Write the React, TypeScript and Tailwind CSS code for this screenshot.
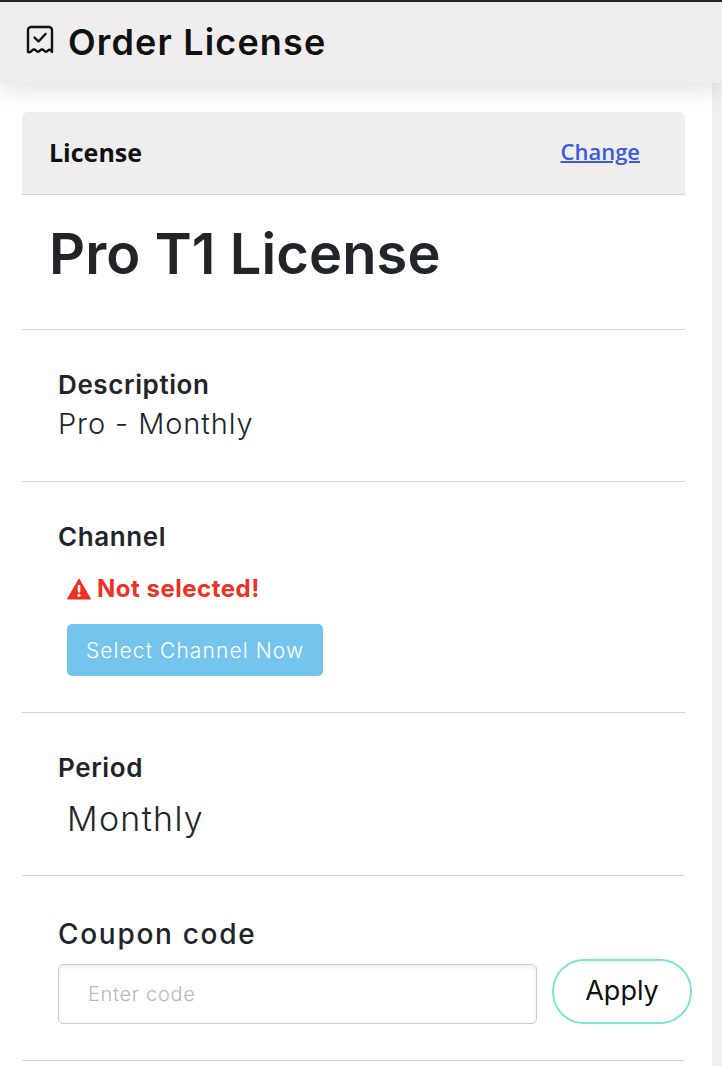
const heading = "font-['Inter',sans-serif] text-[#212529]";

function ReceiptCheck() {
  return (
    <svg width="28" height="30" viewBox="0 0 28 30" fill="none" stroke="#111" strokeWidth="2.400" strokeLinecap="round" strokeLinejoin="round" className="mb-[5px]">
      <path d="M2 27V5a3 3 0 0 1 3-3h18a3 3 0 0 1 3 3v22Q24 23.500 22 25.500Q20 28 18 25.500Q16 23.500 14 25.500Q12 28 10 25.500Q8 23.500 6 25.500Q4 28 2 27z" />
      <path d="M8.500 12.500l4 4 7-7.500" />
    </svg>
  );
}

function Warning() {
  return (
    <svg width="24" height="22" viewBox="0 0 24 22">
      <path d="M12 1 L23.500 21 H0.500 Z" fill="#ee3124" stroke="#ee3124" strokeWidth="1" strokeLinejoin="round" />
      <rect x="10.700" y="7" width="2.600" height="7.500" rx="1" fill="#fff" />
      <circle cx="12" cy="17.300" r="1.600" fill="#fff" />
    </svg>
  );
}

export default function App() {
  return (
    <div className="w-[722px] h-[1066px] overflow-hidden bg-white flex flex-col">
      <div className="relative z-10 h-[83px] shrink-0 border-t-2 border-[#222] bg-[#efedee] shadow-[0_6px_24px_rgba(0,0,0,0.12)] flex items-center pl-[26px] gap-[14px]">
        <ReceiptCheck />
        <h1 className="font-['Inter',sans-serif] text-[36px] font-semibold text-[#111] tracking-[1.150px] leading-none -mt-[1px]">Order License</h1>
      </div>

      <div className="flex flex-1 min-h-0">
        <div className="w-[712px] shrink-0 pl-[22px] pr-[27px] pt-[29px]">
          <div className="h-[83px] rounded-t-[6px] bg-[#efedee] border-b border-[#d8d4d2] flex items-center justify-between pl-[27px] pr-[45px]">
            <span className="font-['Open_Sans',sans-serif] text-[25px] font-bold text-[#111]">License</span>
            <a href="#" className="font-['Open_Sans',sans-serif] text-[22px] font-semibold text-[#3b5bdb] underline decoration-2 -mt-[4px]">Change</a>
          </div>

          <div className="h-[135px] border-b border-[#d8d4d2] pl-[27px] pt-[27px]">
            <h2 className={`${heading} text-[56px] font-semibold tracking-[0.1px] leading-[64px]`}>Pro T1 License</h2>
          </div>

          <div className="h-[152px] border-b border-[#d8d4d2] pl-[36px] pt-[40px]">
            <p className={`${heading} text-[26px] font-semibold tracking-[0.6px] leading-[30px]`}>Description</p>
            <p className={`${heading} text-[29px] font-light tracking-[0.9px] leading-[40px] mt-[4px]`}>Pro - Monthly</p>
          </div>

          <div className="h-[231px] border-b border-[#d8d4d2] pl-[36px] pt-[40px]">
            <p className={`${heading} text-[26px] font-semibold tracking-[0.6px] leading-[30px]`}>Channel</p>
            <div className="flex items-center gap-[6px] ml-[9px] mt-[22px]">
              <Warning />
              <span className="font-['Inter',sans-serif] text-[24px] font-bold tracking-[0.5px] text-[#ee3124] leading-[30px]">Not selected!</span>
            </div>
            <button className="block ml-[9px] mt-[20px] w-[256px] h-[52px] pt-[2px] rounded-[5px] bg-[#74c4ee] font-['Inter',sans-serif] text-[21px] font-light tracking-[1.100px] text-white">Select Channel Now</button>
          </div>

          <div className="h-[163px] border-b border-[#d8d4d2] pl-[36px] pt-[40px]">
            <p className={`${heading} text-[26px] font-semibold tracking-[0.6px] leading-[30px]`}>Period</p>
            <p className={`${heading} ml-[9px] mt-[14px] text-[34px] font-light tracking-[1.300px] leading-[44px]`}>Monthly</p>
          </div>

          <div className="h-[185px] border-b border-[#d8d4d2] pl-[36px] pt-[41px]">
            <p className={`${heading} text-[28px] font-medium tracking-[1.700px] leading-[34px]`}>Coupon code</p>
            <div className="flex items-end gap-[15px] -mr-[7px] mt-[8px]">
              <input
                placeholder="Enter code"
                className="w-[479px] h-[60px] rounded-[5px] border border-[#cccccc] shadow-[inset_0_2px_4px_rgba(0,0,0,0.08)] pl-[29px] font-['Inter',sans-serif] text-[20px] font-light tracking-[0.7px] placeholder:text-[#b9b9b9]"
              />
              <button className="w-[140px] h-[65px] rounded-[32px] border-2 border-[#7fe6d5] font-['Inter',sans-serif] text-[27px] text-[#111]">Apply</button>
            </div>
          </div>
        </div>
        <div className="w-[10px] bg-[#eef0f6]" />
      </div>
    </div>
  );
}
